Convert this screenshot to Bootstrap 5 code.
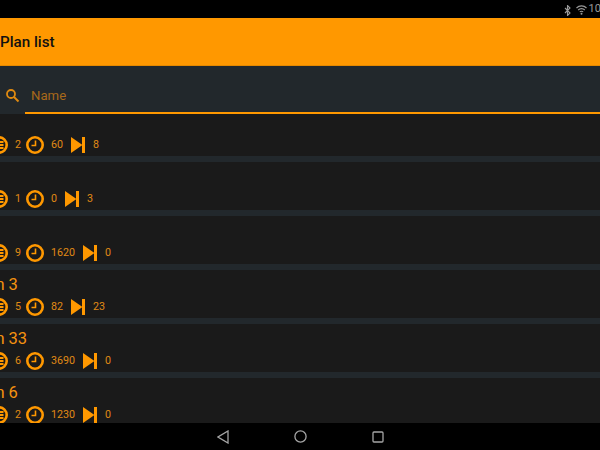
<!DOCTYPE html>
<html lang="en">
<head>
    <meta charset="UTF-8">
    <meta name="viewport" content="width=device-width, initial-scale=1.0">
    <title>Plan list</title>
    <link href="https://cdn.jsdelivr.net/npm/bootstrap@5.3.0/dist/css/bootstrap.min.css" rel="stylesheet">
    <style>
        html, body { height: 100%; }
        body {
            background: #000;
            font-family: Roboto, "Liberation Sans", sans-serif;
            overflow: hidden;
        }
        .app-shell { width: 600px; height: 450px; overflow: hidden; }
        .status-bar { height: 18px; background: #000; color: #9a9a9a; font-size: 11px; padding-top: 1px; }
        .status-clock { margin-left: 2px; margin-right: -16px; line-height: 16px; }
        .app-bar {
            height: 48px;
            background: #ff9800;
            color: #111;
            font-size: 15.2px;
            font-weight: 500;
            padding-top: 2px;
            border-bottom: 1px solid #e58900;
        }
        .search-bar { height: 48px; background: #22282c; }
        .search-icon { width: 25px; flex: none; padding-left: 5px; padding-top: 10px; }
        .search-field {
            height: 48px;
            border-bottom: 2px solid #ff9800;
            color: #a8691a;
            font-size: 13.2px;
            padding-left: 6px;
            padding-top: 20px;
        }
        .plan-list { height: 309px; background: #1a1a1a; overflow: hidden; }
        .plan-row { height: 54px; border-bottom: 6px solid #22282c; color: #f49210; margin-left: -10px; }
        .plan-row.first-row { height: 48px; }
        .plan-title { height: 28px; padding-top: 4px; font-size: 16.5px; line-height: 22px; margin-left: -18px; white-space: nowrap; }
        .first-row .plan-title { height: 22px; }
        .plan-stats { height: 18px; font-size: 10.7px; color: #e08a15; }
        .plan-stats svg { flex: none; display: block; }
        .plan-stats span { padding-top: 1px; }
        .stat-a { margin-left: 7px; margin-right: 5px; }
        .stat-b { margin-left: 7px; margin-right: 8px; }
        .stat-c { margin-left: 8px; }
        .nav-strip { height: 27px; background: #000; gap: 65px; }
    </style>
</head>
<body>
    <div class="app-shell d-flex flex-column">
        <div class="status-bar d-flex justify-content-end align-items-start">
            <svg width="8" height="11" viewBox="0 0 8 11" class="mt-1 me-1"><path d="M1 3l5 5-2.500 2.500v-10L6 3 1 8" fill="none" stroke="#9a9a9a" stroke-width="1.100"/></svg>
            <svg width="11" height="10" viewBox="0 0 11 10" class="mt-1"><path d="M.5 3a7 7 0 0 1 10 0M2.200 5a4.600 4.600 0 0 1 6.600 0M3.800 7a2.300 2.300 0 0 1 3.400 0" fill="none" stroke="#9a9a9a" stroke-width="1.100"/><circle cx="5.500" cy="8.800" r="1" fill="#9a9a9a"/></svg>
            <span class="status-clock">10:30</span>
        </div>
        <div class="app-bar d-flex align-items-center">Plan list</div>
        <div class="search-bar d-flex">
            <div class="search-icon d-flex align-items-center">
                <svg width="15" height="15" viewBox="0 0 15 15"><circle cx="6" cy="6" r="4" fill="none" stroke="#e08a10" stroke-width="1.800"/><path d="M9 9l4.500 4.500" stroke="#e08a10" stroke-width="2"/></svg>
            </div>
            <div class="search-field flex-grow-1">Name</div>
        </div>
        <div class="plan-list" id="plans"></div>
        <div class="nav-strip d-flex justify-content-center align-items-center">
            <svg width="12" height="14" viewBox="0 0 12 14"><path d="M11 1v12L1 7z" fill="none" stroke="#a5a5a5" stroke-width="1.300"/></svg>
            <svg width="13" height="13" viewBox="0 0 13 13"><circle cx="6.500" cy="6.500" r="5.600" fill="none" stroke="#a5a5a5" stroke-width="1.300"/></svg>
            <svg width="12" height="12" viewBox="0 0 12 12"><rect x="1" y="1" width="10" height="10" rx="1" fill="none" stroke="#a5a5a5" stroke-width="1.300"/></svg>
        </div>
    </div>
    <script>
        var listIcon = '<svg width="18" height="18" viewBox="0 0 18 18"><circle cx="9" cy="9" r="7.700" fill="none" stroke="#ff9800" stroke-width="2.600"/><path d="M4.500 6h9M4.500 9h9M4.500 12h9" stroke="#ff9800" stroke-width="1.800"/></svg>';
        var clockIcon = '<svg width="18" height="18" viewBox="0 0 18 18"><circle cx="9" cy="9" r="7.700" fill="none" stroke="#ff9800" stroke-width="2.600"/><path d="M9.500 4.500v5H5.500" fill="none" stroke="#ff9800" stroke-width="1.600"/></svg>';
        var skipIcon = '<svg width="14" height="16" viewBox="0 0 14 16"><path d="M0 0l11.500 8-11.500 8z" fill="#ff9800"/><rect x="11" y="0" width="3" height="16" fill="#ff9800"/></svg>';
        var plans = [
            ['', 2, 60, 8], ['', 1, 0, 3], ['', 9, 1620, 0],
            ['Plan 3', 5, 82, 23], ['Plan 33', 6, 3690, 0], ['Plan 6', 2, 1230, 0]
        ];
        document.getElementById('plans').innerHTML = plans.map(function (p, i) {
            return '<div class="plan-row' + (i === 0 ? ' first-row' : '') + '">' +
                '<div class="plan-title">' + (p[0] || '&nbsp;') + '</div>' +
                '<div class="plan-stats d-flex align-items-center">' + listIcon +
                '<span class="stat-a">' + p[1] + '</span>' + clockIcon +
                '<span class="stat-b">' + p[2] + '</span>' + skipIcon +
                '<span class="stat-c">' + p[3] + '</span></div></div>';
        }).join('');
    </script>
    <script src="https://cdn.jsdelivr.net/npm/bootstrap@5.3.0/dist/js/bootstrap.bundle.min.js"></script>
</body>
</html>
